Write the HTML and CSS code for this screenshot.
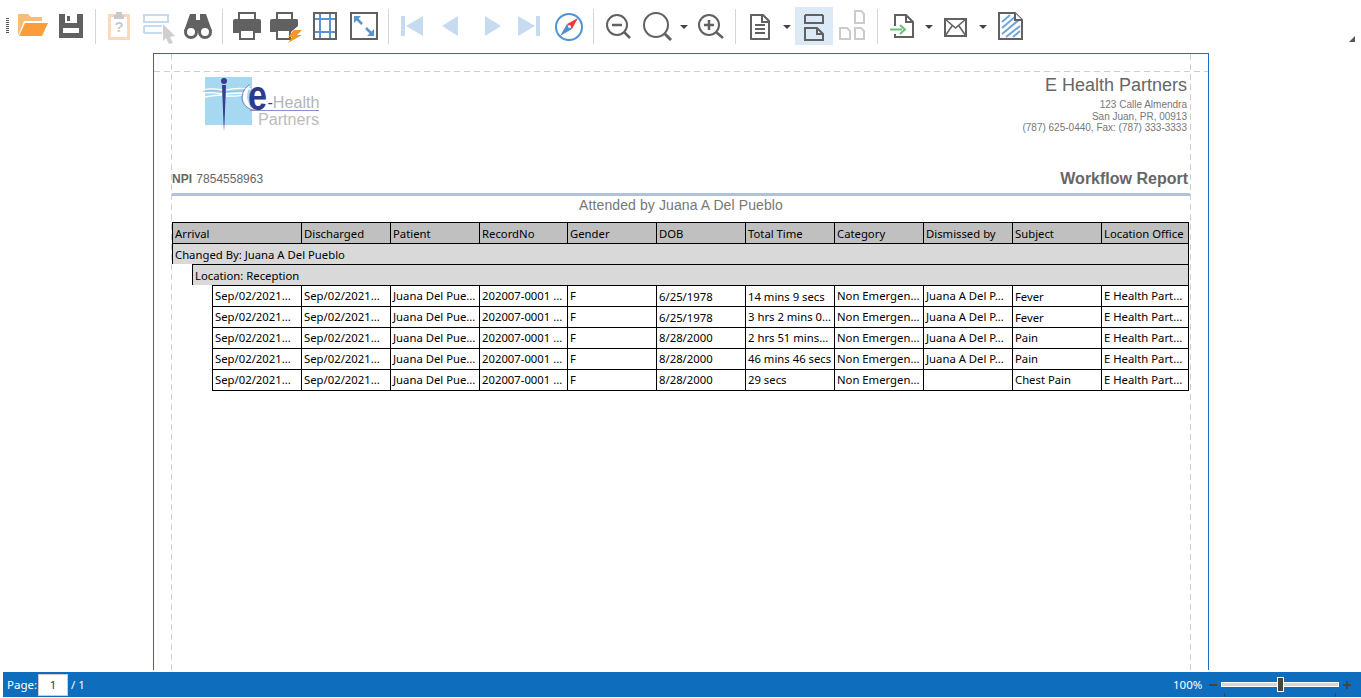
FILE: index.html
```html
<!DOCTYPE html>
<html lang="en">
<head>
<meta charset="utf-8">
<title>Workflow Report</title>
<link rel="stylesheet" href="styles.css">
</head>
<body>
<div class="app">
  <header class="toolbar">
    <span class="grip"></span>
    <button class="tool"><svg viewBox="0 0 38 38"><path d="M5 7h10l3 3h11v4H11L6 27H5z" fill="#f9bb78"/><path d="M12 16h23l-6 13H6z" fill="#fb9d3b"/></svg></button>
    <button class="tool"><svg viewBox="0 0 38 38"><path d="M7 7h24v24H7z" fill="#616161"/><path d="M13 7h12v9H13z" fill="#fff"/><path d="M15 9h3v5h-3z" fill="#616161"/><path d="M11 21h16v5H11z" fill="#fff"/></svg></button>
    <span class="sep"></span>
    <button class="tool"><svg viewBox="0 0 38 38"><path d="M8.500 8.500h19v23h-19z" fill="#fff" stroke="#fcd9bb" stroke-width="3"/><path d="M15 5h6v3h2v4H13V8h2z" fill="#c9c9c9"/><text x="18" y="25" class="qmark">?</text></svg></button>
    <button class="tool"><svg viewBox="0 0 38 38"><path d="M4 8h24v7H4zM4 19h18M4 26h18M4 19v7" fill="none" stroke="#c6daf0" stroke-width="2"/><path d="M23 17l12 12-5 1 3 6-4 1-3-6-3 3z" fill="#cfcfcf"/></svg></button>
    <button class="tool"><svg viewBox="0 0 38 38"><path d="M11 7h6v6h4V7h6l6 17H5z" fill="#616161"/><circle cx="12" cy="25" r="5.500" fill="#fff" stroke="#616161" stroke-width="3"/><circle cx="26" cy="25" r="5.500" fill="#fff" stroke="#616161" stroke-width="3"/></svg></button>
    <span class="sep"></span>
    <button class="tool"><svg viewBox="0 0 38 38"><path d="M11 13V6h16v7" fill="none" stroke="#616161" stroke-width="2"/><path d="M7 12h24a2 2 0 0 1 2 2v12h-6v-4H11v4H5V14a2 2 0 0 1 2-2z" fill="#616161"/><path d="M12 23h14v9H12z" fill="#fff" stroke="#616161" stroke-width="2"/></svg></button>
    <button class="tool"><svg viewBox="0 0 38 38"><path d="M10 13V6h15v7" fill="none" stroke="#616161" stroke-width="2"/><path d="M5 12h25a2 2 0 0 1 1 2v5l-7 6H3V14a2 2 0 0 1 2-2z" fill="#616161"/><path d="M10 23h13v9H10z" fill="#fff" stroke="#616161" stroke-width="2"/><path d="M27 23h8l-5 5h5L21 36l4-6h-4z" fill="#f79532"/></svg></button>
    <button class="tool"><svg viewBox="0 0 38 38"><path d="M14 6v26M24 6v26M8 12h22M8 25h22" stroke="#5a93cd" stroke-width="2" fill="none"/><path d="M8 6h22v26H8z" fill="none" stroke="#616161" stroke-width="2"/></svg></button>
    <button class="tool"><svg viewBox="0 0 38 38"><path d="M6 6h26v26H6z" fill="none" stroke="#616161" stroke-width="2"/><path d="M11 11l6 6M21 21l6 6" stroke="#5a93cd" stroke-width="2.500"/><path d="M9 9h7l-7 7zM29 29h-7l7-7z" fill="#5a93cd"/></svg></button>
    <span class="sep"></span>
    <button class="tool"><svg viewBox="0 0 38 38"><path d="M7 9h4v20H7zM12 19l17-10v20z" fill="#c6daf0"/></svg></button>
    <button class="tool"><svg viewBox="0 0 38 38"><path d="M9 19l16-10v20z" fill="#c6daf0"/></svg></button>
    <button class="tool"><svg viewBox="0 0 38 38"><path d="M29 19L13 9v20z" fill="#c6daf0"/></svg></button>
    <button class="tool"><svg viewBox="0 0 38 38"><path d="M25 9h4v20h-4zM24 19L7 9v20z" fill="#c6daf0"/></svg></button>
    <button class="tool"><svg viewBox="0 0 38 38"><circle cx="19" cy="20" r="13" fill="#fff" stroke="#4f94d4" stroke-width="2"/><path d="M28 11l-11 6 5 5z" fill="#ee3b3b"/><path d="M10 29l7-12 5 5z" fill="#4f8fd0"/><circle cx="19.500" cy="19.500" r="1.500" fill="#fff"/></svg></button>
    <span class="sep"></span>
    <button class="tool"><svg viewBox="0 0 38 38"><circle cx="18" cy="18" r="10" fill="none" stroke="#616161" stroke-width="2"/><path d="M13 18h10M25 25l6 6" stroke="#616161" stroke-width="2.500" fill="none"/></svg></button>
    <button class="tool"><svg viewBox="0 0 38 38"><circle cx="18" cy="18" r="12" fill="none" stroke="#616161" stroke-width="2"/><path d="M27 27l6 6" stroke="#616161" stroke-width="3"/></svg></button>
    <span class="caret"></span>
    <button class="tool"><svg viewBox="0 0 38 38"><circle cx="17" cy="18" r="10" fill="none" stroke="#616161" stroke-width="2"/><path d="M12 18h10M17 13v10M24 25l7 6" stroke="#616161" stroke-width="2.500" fill="none"/></svg></button>
    <span class="sep"></span>
    <button class="tool"><svg viewBox="0 0 38 38"><path d="M11 8h11l6 6v18H10V8z" fill="none" stroke="#616161" stroke-width="2" stroke-linejoin="round"/><path d="M21 8v7h7M14 18h10M14 22h10M14 26h10" fill="none" stroke="#616161" stroke-width="2"/></svg></button>
    <span class="caret"></span>
    <button class="tool active"><svg viewBox="0 0 38 38"><path d="M10 8h18M10 8v8h18V8" fill="none" stroke="#616161" stroke-width="2"/><path d="M10 21h12l6 6v6H10z" fill="none" stroke="#616161" stroke-width="2"/><path d="M22 21v6h6" fill="none" stroke="#616161" stroke-width="2"/></svg></button>
    <button class="tool"><svg viewBox="0 0 38 38"><g fill="none" stroke="#cbcbcb" stroke-width="2"><path d="M21 4h6l3 3v9h-9zM6 21h7l3 3v8H6zM21 21h6l3 3v8h-9z"/></g></svg></button>
    <span class="sep"></span>
    <button class="tool"><svg viewBox="0 0 38 38"><path d="M12 19V8h11l7 7v15H12v-3" fill="none" stroke="#616161" stroke-width="2"/><path d="M23 8v7h7" fill="none" stroke="#616161" stroke-width="2"/><path d="M7 22.500h12" stroke="#6fbf7c" stroke-width="2"/><path d="M17 18l5 4.500-5 4.500" fill="none" stroke="#6fbf7c" stroke-width="2"/></svg></button>
    <span class="caret"></span>
    <button class="tool"><svg viewBox="0 0 38 38"><path d="M8 12h21v17H8z" fill="none" stroke="#616161" stroke-width="2"/><path d="M8 12l10.500 9L29 12M8 29l7-10M29 29l-7-10" fill="none" stroke="#616161" stroke-width="1.500"/></svg></button>
    <span class="caret"></span>
    <button class="tool"><svg viewBox="0 0 38 38"><path d="M8 6h16l7 7v19H8z" fill="#fff" stroke="#616161" stroke-width="2"/><path d="M11 15l8-7M11 21l14-12M11 27l18-15M15 30l14-11M22 30l7-6" stroke="#6fa5da" stroke-width="2"/><path d="M24 6v7h7" fill="#fff" stroke="#616161" stroke-width="2"/></svg></button>
    <svg class="resize" viewBox="0 0 6 6"><path d="M6 0v6H0z"/></svg>
  </header>

  <main class="viewer">
    <section class="page">
      <span class="guide guide-top"></span>
      <span class="guide guide-left"></span>
      <span class="guide guide-right"></span>

      <div class="letterhead">
        <svg class="logo" viewBox="200 72 125 60">
          <rect x="205" y="77" width="47" height="48" fill="#a6d8f2"/>
          <path d="M203 90c7-2 14-1 19 0M203 93c7-1 14 0 19 1M205 97c6-1 12-2 17-2M226 90c7-2 16-2 25-1M226 94c7-1 14-1 20-1M226 96c5 0 11 1 16-1" fill="none" stroke="#fff" stroke-width="1.300"/>
          <path d="M203 91.500c7-1 14-1 19 0M226 92c7-1 15-1 22-1" fill="none" stroke="#9aa3ad" stroke-width=".6"/>
          <circle cx="224" cy="81" r="3" fill="#3b3c8f"/>
          <path d="M222 85h4l-1.500 38-.5 8-.5-8z" fill="#3b3c8f"/>
          <path d="M250 85c-5 3-7 8-7 13 0 6 5 11 11 12h5l-9-3-3-9c0-5 1-9 3-13z" fill="#fff"/>
          <path d="M250 84.500c-5 3-8 8-8 13.500 0 6 6 12 13 12" fill="none" stroke="#5a60a8" stroke-width=".7"/>
          <text x="248" y="110" class="logo-e" textLength="19" lengthAdjust="spacingAndGlyphs">e</text>
          <text x="267.500" y="107.500" class="logo-health" textLength="52" lengthAdjust="spacingAndGlyphs"><tspan class="logo-dash">-</tspan>Health</text>
          <path d="M250 110.500h69" stroke="#7e92c6" stroke-width="1"/>
          <text x="258" y="125" class="logo-partners" textLength="61" lengthAdjust="spacingAndGlyphs">Partners</text>
        </svg>
        <div class="company">
          <h1 class="company-name">E Health Partners</h1>
          <p>123 Calle Almendra</p>
          <p>San Juan, PR, 00913</p>
          <p>(787) 625-0440, Fax: (787) 333-3333</p>
        </div>
      </div>

      <div class="titlebar">
        <div class="npi"><b>NPI</b> <span class="npi-value">7854558963</span></div>
        <h2 class="report-title">Workflow Report</h2>
      </div>
      <div class="attended">Attended by Juana A Del Pueblo</div>

      <div class="table">
        <div class="row head">
          <div>Arrival</div><div>Discharged</div><div>Patient</div><div>RecordNo</div><div>Gender</div><div>DOB</div><div>Total Time</div><div>Category</div><div>Dismissed by</div><div>Subject</div><div>Location Office</div>
        </div>
        <div class="group">Changed By: Juana A Del Pueblo</div>
        <div class="group level2">Location: Reception</div>
        <div class="row data">
          <div>Sep/02/2021...</div><div>Sep/02/2021...</div><div>Juana Del Pue...</div><div>202007-0001 ...</div><div>F</div><div class="low">6/25/1978</div><div class="low">14 mins 9 secs</div><div>Non Emergen...</div><div>Juana A Del P...</div><div class="low">Fever</div><div>E Health Part...</div>
        </div>
        <div class="row data">
          <div>Sep/02/2021...</div><div>Sep/02/2021...</div><div>Juana Del Pue...</div><div>202007-0001 ...</div><div>F</div><div class="low">6/25/1978</div><div>3 hrs 2 mins 0...</div><div>Non Emergen...</div><div>Juana A Del P...</div><div class="low">Fever</div><div>E Health Part...</div>
        </div>
        <div class="row data">
          <div>Sep/02/2021...</div><div>Sep/02/2021...</div><div>Juana Del Pue...</div><div>202007-0001 ...</div><div>F</div><div>8/28/2000</div><div>2 hrs 51 mins...</div><div>Non Emergen...</div><div>Juana A Del P...</div><div>Pain</div><div>E Health Part...</div>
        </div>
        <div class="row data">
          <div>Sep/02/2021...</div><div>Sep/02/2021...</div><div>Juana Del Pue...</div><div>202007-0001 ...</div><div>F</div><div>8/28/2000</div><div>46 mins 46 secs</div><div>Non Emergen...</div><div>Juana A Del P...</div><div>Pain</div><div>E Health Part...</div>
        </div>
        <div class="row data last">
          <div>Sep/02/2021...</div><div>Sep/02/2021...</div><div>Juana Del Pue...</div><div>202007-0001 ...</div><div>F</div><div>8/28/2000</div><div>29 secs</div><div>Non Emergen...</div><div></div><div>Chest Pain</div><div>E Health Part...</div>
        </div>
      </div>
    </section>
  </main>

  <footer class="statusbar">
    <span class="page-label">Page:</span>
    <span class="page-box">1</span>
    <span class="page-total">/ 1</span>
    <span class="zoom-value">100%</span>
    <span class="zoom-minus"></span>
    <span class="slider"><span class="thumb"></span><span class="tick tick-a"></span><span class="tick tick-b"></span></span>
    <span class="zoom-plus"></span>
  </footer>
</div>
</body>
</html>
```
FILE: styles.css
```css
* { box-sizing: border-box; }
html, body { margin: 0; height: 100%; background: #fff; overflow: hidden; }
p, h1, h2 { margin: 0; font-weight: normal; }

.app {
  display: flex;
  flex-direction: column;
  height: 698px;
  font-family: "Noto Sans", sans-serif;
}

/* toolbar */
.toolbar {
  display: flex;
  align-items: flex-start;
  height: 53px;
  flex: none;
  padding: 7px 0 0 13px;
  position: relative;
}
.grip {
  position: absolute;
  left: 6px;
  top: 18px;
  width: 3px;
  height: 15px;
  background: repeating-linear-gradient(#555 0 1px, #fff 1px 2px);
}
.tool {
  width: 38px;
  height: 38px;
  margin-right: 1px;
  padding: 0;
  border: 0;
  background: none;
  flex: none;
}
.tool svg { display: block; width: 38px; height: 38px; }
.tool.active { background: #dce9f6; }
.sep {
  flex: none;
  width: 1px;
  height: 35px;
  margin: 2px 5px 0 4px;
  background: #d6d6d6;
}
.caret {
  flex: none;
  width: 15px;
  height: 38px;
  position: relative;
}
.caret::after {
  content: "";
  position: absolute;
  left: 3px;
  top: 18px;
  border-left: 4px solid transparent;
  border-right: 4px solid transparent;
  border-top: 4px solid #444;
}
.qmark { font: bold 15px "Liberation Sans", sans-serif; fill: #c9c9c9; text-anchor: middle; }
.resize {
  position: absolute;
  right: 6px;
  top: 36px;
  width: 6px;
  height: 6px;
  fill: #555;
}

/* report page */
.viewer {
  flex: 1;
  min-height: 0;
  padding-left: 153px;
  overflow: hidden;
}
.page {
  position: relative;
  width: 1056px;
  height: 617px;
  border: 1px solid #1a70c0;
  border-bottom: 0;
  padding: 0 18px;
  overflow: hidden;
}
.guide { position: absolute; }
.guide-top {
  left: 0; right: 0; top: 17px; height: 1px;
  background: repeating-linear-gradient(90deg, #cfcfcf 0 6px, transparent 6px 10px);
}
.guide-left, .guide-right {
  top: 0; bottom: 0; width: 1px;
  background: repeating-linear-gradient(#cfcfcf 0 6px, transparent 6px 10px);
}
.guide-left { left: 17px; }
.guide-right { left: 1036px; }

.letterhead {
  display: flex;
  justify-content: space-between;
  align-items: flex-start;
  height: 114px;
  font-family: "Liberation Sans", sans-serif;
  color: #777;
}
.logo { width: 125px; height: 60px; margin: 18px 0 0 28px; flex: none; }
.logo-e { font: bold 42px "Liberation Sans", sans-serif; fill: #2f3a8a; }
.logo-health { font: 16px "Liberation Sans", sans-serif; fill: #b4b4b4; }
.logo-dash { fill: #2f3a8a; }
.logo-partners { font: 16px "Liberation Sans", sans-serif; fill: #bcbcbc; }
.company {
  padding: 20px 3px 0 0;
  text-align: right;
  font-size: 10px;
  line-height: 11.500px;
}
.company-name { font-size: 18px; line-height: 22px; color: #666; margin-bottom: 3px; }

.titlebar {
  display: flex;
  justify-content: space-between;
  align-items: flex-end;
  height: 28px;
  padding: 0 2px 5px 0;
  border-bottom: 3px solid #b0c1da;
  font-family: "Liberation Sans", sans-serif;
  color: #666;
}
.npi { font-size: 12px; line-height: 15px; margin-bottom: 1px; }
.npi-value { margin-left: 1px; }
.report-title { font-size: 16px; line-height: 18px; font-weight: bold; }
.attended {
  height: 26px;
  text-align: center;
  font: 14px/18px "Liberation Sans", sans-serif;
  letter-spacing: .1px;
  color: #777;
}

/* table */
.table { width: 1017px; font-size: 11.300px; line-height: 20px; color: #000; }
.row {
  display: grid;
  grid-template-columns: 89px 89px 89px 88px 89px 89px 89px 89px 89px 89px 88px;
  height: 21px;
  border-top: 1px solid #000;
  white-space: nowrap;
}
.row > div {
  border-left: 1px solid #000;
  padding-left: 2px;
  overflow: hidden;
}
.row > div:last-child { border-right: 1px solid #000; }
.row.head {
  grid-template-columns: 129px 89px 89px 88px 89px 89px 89px 89px 89px 89px 88px;
  background: #c0c0c0;
}
.row.head > div { padding-top: 1px; }
.row.data { margin-left: 40px; }
.row.last { height: 22px; border-bottom: 1px solid #000; }
.row .low { padding-top: 1px; }
.group {
  height: 21px;
  padding: 1px 0 0 2px;
  border: 1px solid #000;
  border-width: 1px 1px 0 1px;
  background: #d9d9d9;
}
.group.level2 { margin-left: 20px; }

/* status bar */
.statusbar {
  display: flex;
  align-items: center;
  flex: none;
  height: 25px;
  margin: 0 0 1px 3px;
  padding-left: 4px;
  background: #0f6dbd;
  color: #fff;
  font-size: 11.500px;
  position: relative;
}
.page-label { width: 31px; }
.page-box {
  width: 30px;
  height: 22px;
  line-height: 20px;
  text-align: center;
  background: #fff;
  border: 1px solid #ccc;
  color: #333;
}
.page-total { margin-left: 3px; }
.zoom-value { margin-left: auto; width: 36px; }
.zoom-minus { width: 8px; height: 2px; background: #444; }
.slider {
  position: relative;
  width: 118px;
  height: 5px;
  margin: 0 4px;
  background: #d6d6d6;
  border: 1px solid #fff;
}
.thumb {
  position: absolute;
  left: 55px;
  top: -6px;
  width: 7px;
  height: 15px;
  background: #444;
  border: 1px solid #fff;
}
.tick { position: absolute; top: 10px; width: 1px; height: 4px; background: #444; }
.tick-a { left: 2px; }
.tick-b { left: 113px; }
.zoom-plus {
  position: relative;
  width: 8px;
  height: 2px;
  margin-right: 10px;
  background: #444;
}
.zoom-plus::after {
  content: "";
  position: absolute;
  left: 3px;
  top: -3px;
  width: 2px;
  height: 8px;
  background: #444;
}
```
